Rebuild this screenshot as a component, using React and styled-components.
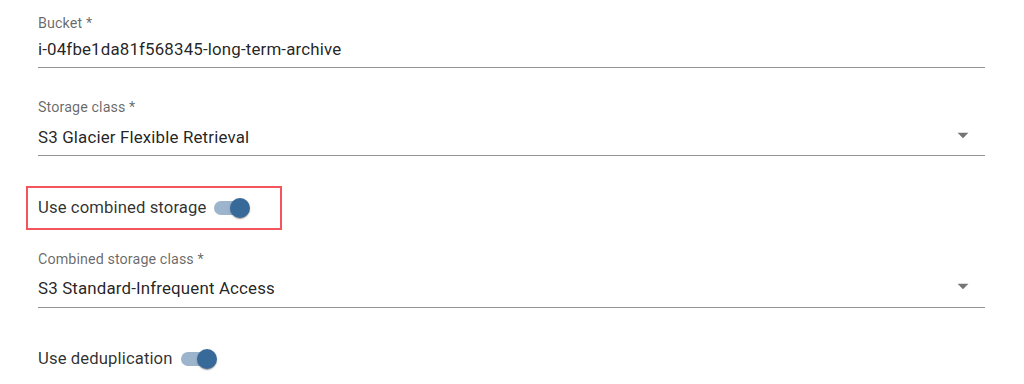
import React from "react";
import styled, { createGlobalStyle } from "styled-components";

const Global = createGlobalStyle`
  html, body { margin: 0; padding: 0; background: #ffffff; }
  body { font-family: Roboto, "Noto Sans", "Liberation Sans", sans-serif; }
  * { box-sizing: border-box; }
`;

const Page = styled.div`
  width: 1024px;
  height: 384px;
  overflow: hidden;
  padding: 15px 39px 0 38px;
  display: flex;
  flex-direction: column;
`;

const Field = styled.div`
  display: flex;
  flex-direction: column;
  margin-top: ${(p) => p.$mt || 0}px;
  border-bottom: 1px solid rgba(0, 0, 0, 0.42);
  padding-bottom: ${(p) => p.$pb}px;
`;

const Label = styled.label`
  font-size: 14.3px;
  line-height: 16px;
  color: rgba(0, 0, 0, 0.6);
  letter-spacing: 0.1px;
`;

const ValueRow = styled.div`
  display: flex;
  align-items: center;
  height: 24px;
  margin-top: ${(p) => p.$gap}px;
`;

const Value = styled.div`
  flex: 1;
  font-size: 16.9px;
  line-height: 24px;
  color: rgba(0, 0, 0, 0.87);
  letter-spacing: 0.15px;
  white-space: nowrap;
`;

const Arrow = styled.svg`
  width: 26px;
  height: 26px;
  margin-right: 9px;
  margin-bottom: 4px;
  fill: rgba(0, 0, 0, 0.54);
  flex-shrink: 0;
`;

const ToggleRow = styled.div`
  display: flex;
  align-items: center;
  height: ${(p) => (p.$outlined ? 44 : 40)}px;
  margin-top: ${(p) => p.$mt}px;
  ${(p) =>
    p.$outlined
      ? `
    width: 256px;
    margin-left: -12px;
    padding-left: 10px;
    border: 2px solid #f2555b;
  `
      : ""}
`;

const ToggleLabel = styled.span`
  font-size: 16.7px;
  line-height: 24px;
  color: rgba(0, 0, 0, 0.82);
  letter-spacing: 0.1px;
`;

const Switch = styled.span`
  position: relative;
  display: inline-block;
  width: 36px;
  height: 20px;
  margin-left: 8px;
  flex-shrink: 0;
`;

const Track = styled.span`
  position: absolute;
  left: 0;
  top: 3px;
  width: 34px;
  height: 14px;
  border-radius: 7px;
  background: ${(p) => (p.$on ? "#9cb4cc" : "#bdbdbd")};
`;

const Thumb = styled.span`
  position: absolute;
  top: 0;
  left: ${(p) => (p.$on ? 16 : 0)}px;
  width: 20px;
  height: 20px;
  border-radius: 50%;
  background: ${(p) => (p.$on ? "#386a99" : "#fafafa")};
  box-shadow: 0 2px 1px -1px rgba(0, 0, 0, 0.2), 0 1px 1px 0 rgba(0, 0, 0, 0.14),
    0 1px 3px 0 rgba(0, 0, 0, 0.12);
`;

const DropIcon = () => (
  <Arrow viewBox="0 0 24 24" aria-hidden="true">
    <path d="M7 10l5 5 5-5z" />
  </Arrow>
);

const Toggle = ({ on }) => (
  <Switch role="switch" aria-checked={on}>
    <Track $on={on} />
    <Thumb $on={on} />
  </Switch>
);

export default function App() {
  return (
    <>
      <Global />
      <Page>
        <Field $pb={6}>
          <Label>Bucket *</Label>
          <ValueRow $gap={6}>
            <Value>i-04fbe1da81f568345-long-term-archive</Value>
          </ValueRow>
        </Field>

        <Field $mt={31} $pb={6}>
          <Label>Storage class *</Label>
          <ValueRow $gap={10}>
            <Value>S3 Glacier Flexible Retrieval</Value>
            <DropIcon />
          </ValueRow>
        </Field>

        <ToggleRow $outlined $mt={30}>
          <ToggleLabel>Use combined storage</ToggleLabel>
          <Toggle on />
        </ToggleRow>

        <Field $mt={21} $pb={7}>
          <Label>Combined storage class *</Label>
          <ValueRow $gap={9}>
            <Value>S3 Standard-Infrequent Access</Value>
            <DropIcon />
          </ValueRow>
        </Field>

        <ToggleRow $mt={31}>
          <ToggleLabel>Use deduplication</ToggleLabel>
          <Toggle on />
        </ToggleRow>
      </Page>
    </>
  );
}
